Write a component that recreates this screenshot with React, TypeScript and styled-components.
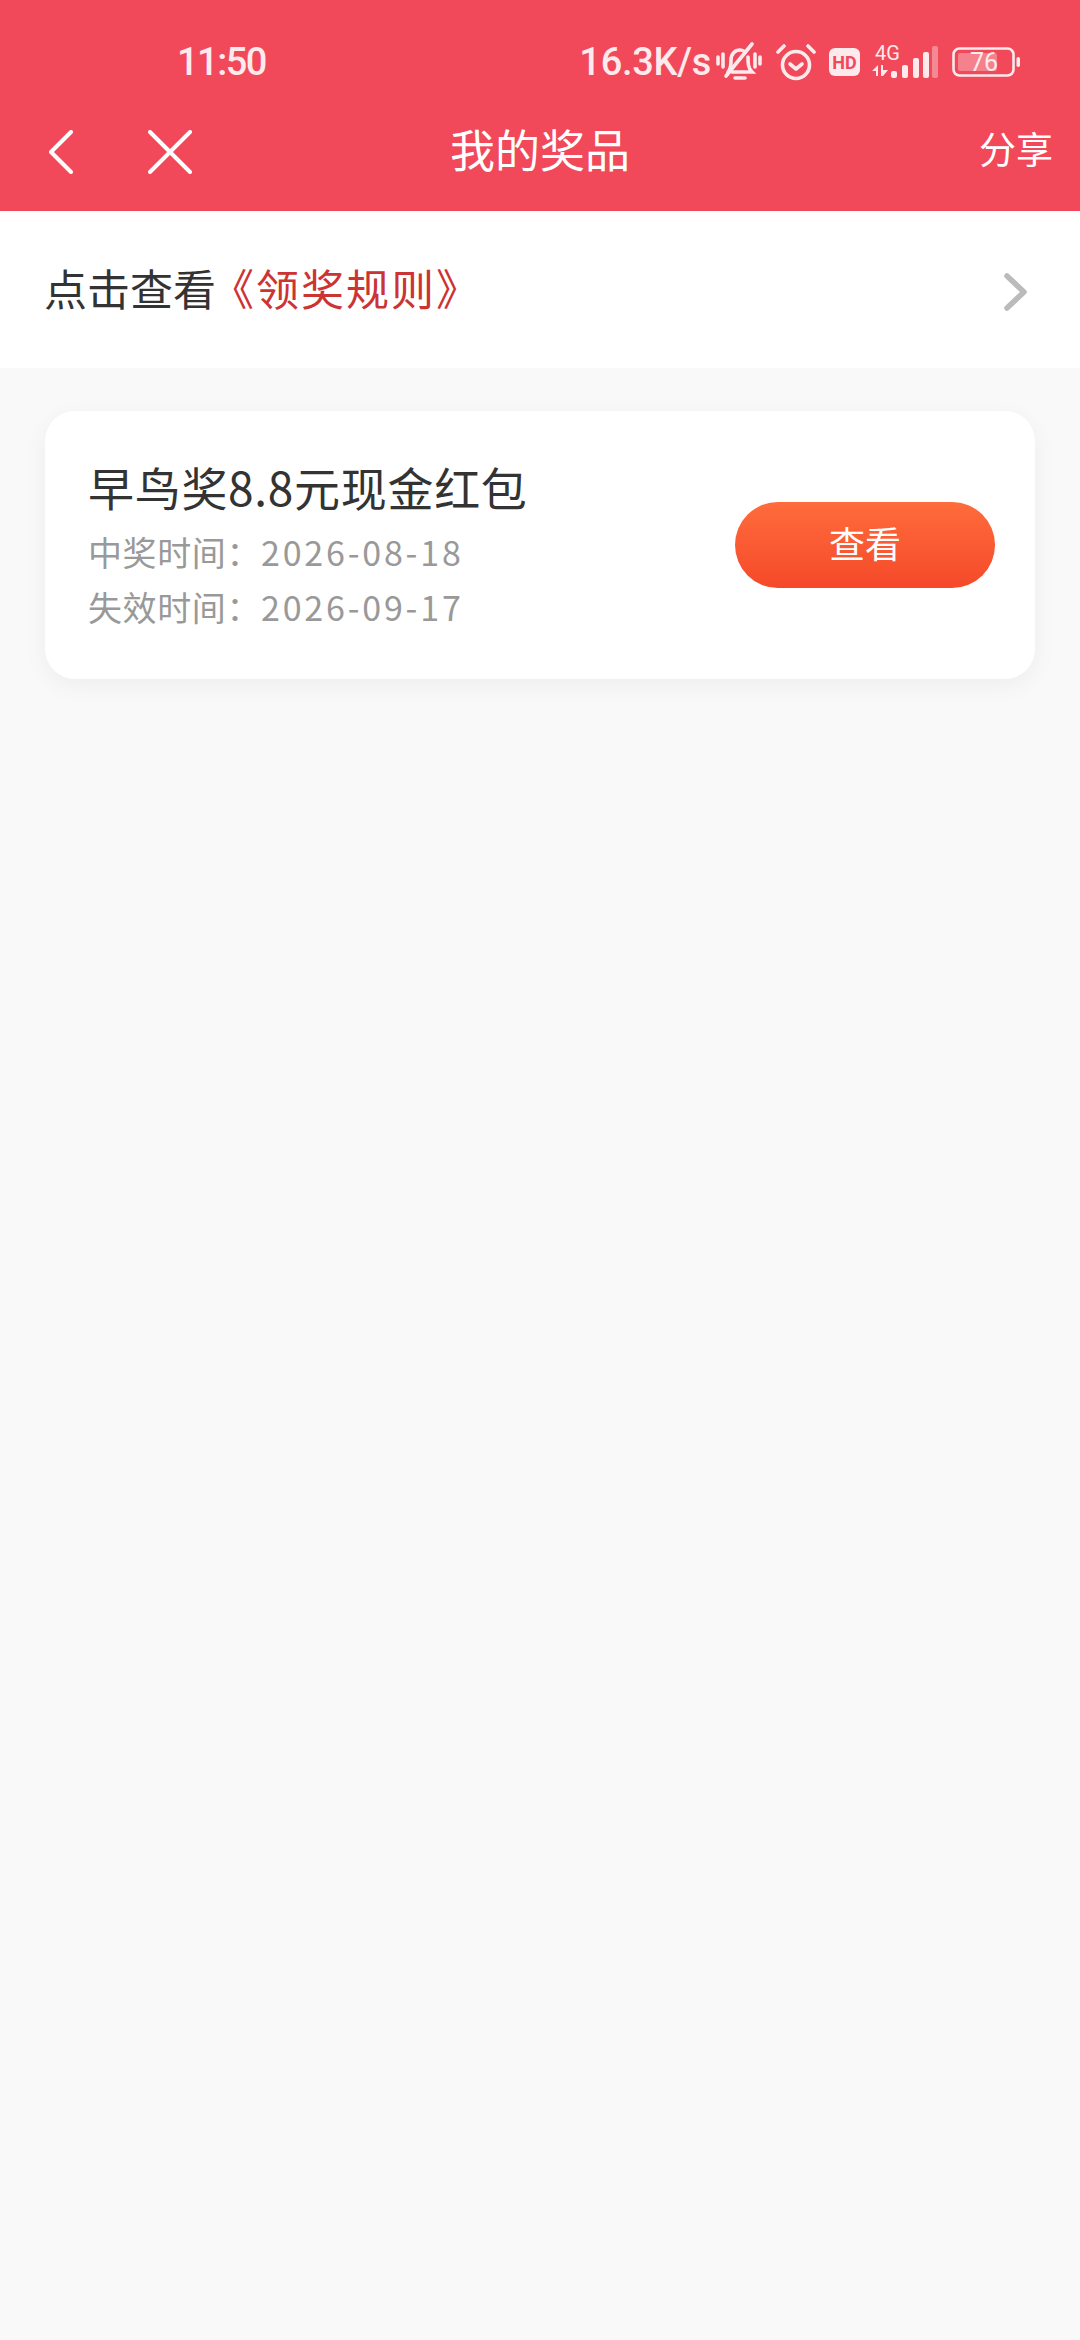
import React from 'react';
import styled, { createGlobalStyle } from 'styled-components';

const GlobalStyle = createGlobalStyle`
  html, body {
    margin: 0;
    padding: 0;
    background: #f9f9f9;
    font-family: "Noto Sans CJK SC", "Noto Sans", sans-serif;
  }
  * { box-sizing: border-box; }
`;

const Page = styled.div`
  width: 1080px;
  height: 2340px;
  background: #f9f9f9;
  display: flex;
  flex-direction: column;
  overflow: hidden;
`;
const Header = styled.header`
  background: #f14959;
  color: #fff;
`;
const StatusBar = styled.div`
  height: 92px;
  padding: 32px 60px 0 177px;
  display: flex;
  align-items: center;
  justify-content: space-between;
`;
const StatusText = styled.span`
  font-family: Roboto, sans-serif;
  font-size: 38px;
  font-weight: 500;
  line-height: 60px;
  color: #fdeaec;
  letter-spacing: -1.5px;
`;
const StatusIcons = styled.div`
  display: flex;
  align-items: center;
`;
const Speed = styled(StatusText)`
  margin-right: 5px;
  letter-spacing: -0.3px;
`;
const Icon = styled.svg<{ $gap?: number }>`
  display: block;
  flex: none;
  margin-left: ${(p) => p.$gap ?? 0}px;
`;
const IconLabel = styled.text<{ $size: number; $bold?: boolean }>`
  font-family: Roboto, sans-serif;
  font-size: ${(p) => p.$size}px;
  font-weight: ${(p) => (p.$bold ? 700 : 400)};
`;
const NavBar = styled.nav`
  height: 119px;
  padding: 0 27px;
  display: grid;
  grid-template-columns: 1fr auto 1fr;
  align-items: center;
`;
const NavLeft = styled.div`
  display: flex;
  align-items: center;
  gap: 75px;
  padding-left: 22px;
`;
const NavTitle = styled.h1`
  margin: 0 0 6px;
  font-size: 45px;
  line-height: 60px;
  font-weight: 400;
`;
const Share = styled.span`
  justify-self: end;
  margin-bottom: 8px;
  font-size: 37px;
  line-height: 50px;
`;
const RuleRow = styled.div`
  height: 157px;
  padding: 0 53px 0 44px;
  background: #fff;
  display: flex;
  align-items: center;
  justify-content: space-between;
`;
const RuleText = styled.div`
  margin-bottom: 6px;
  font-size: 43px;
  line-height: 56px;
  color: #333;
`;
const RuleLink = styled.span`
  margin-left: -5px;
  color: #cc3333;
  letter-spacing: 2px;
`;
const RuleArrow = styled(Icon)`
  margin-top: 4px;
`;
const List = styled.main`
  padding: 43px 45px;
`;
const Card = styled.article`
  height: 268px;
  padding: 0 40px 0 43px;
  background: #fff;
  border-radius: 30px;
  box-shadow: 0 6px 24px rgba(0, 0, 0, 0.05);
  display: flex;
  align-items: center;
  justify-content: space-between;
`;
const PrizeInfo = styled.div`
  display: flex;
  flex-direction: column;
  margin-top: -2px;
`;
const PrizeTitle = styled.div`
  font-size: 46px;
  line-height: 64px;
  color: #333;
  margin-bottom: 6px;
  letter-spacing: 0.7px;
`;
const PrizeDate = styled.div`
  font-size: 34px;
  line-height: 55px;
  color: #999;
  letter-spacing: 0.6px;
`;
const DateValue = styled.span`
  letter-spacing: 2.8px;
`;
const ViewButton = styled.button`
  width: 260px;
  height: 86px;
  padding: 0 0 6px;
  border: 0;
  border-radius: 43px;
  background: linear-gradient(180deg, #ff6c3b 0%, #f5492a 100%);
  color: #fff;
  font-family: inherit;
  font-size: 36px;
`;

const BellOff = () => (
  <Icon width="46" height="42" viewBox="0 0 46 42" fill="none" stroke="#fdeaec" strokeWidth="3.6" strokeLinecap="round">
    <path d="M2 16v7M7 13v13M39 13v13M44 16v7" />
    <path d="M12 31c3-3 3-7 3-12 0-6 4-10 9-10 2 0 4 1 5 2M32 16c0 6 0 11 4 15H16" />
    <path d="M19 37h10" />
    <path d="M10 35 36 3" />
  </Icon>
);

const Alarm = () => (
  <Icon $gap={14} width="40" height="38" viewBox="0 0 40 38" fill="none" stroke="#fdeaec" strokeWidth="3.6" strokeLinecap="round" strokeLinejoin="round">
    <circle cx="20" cy="22" r="13.5" />
    <path d="M2 9 8 3M38 9 32 3" />
    <path d="M14 21l6 5 6-5" />
  </Icon>
);

const HdBadge = () => (
  <Icon $gap={13} width="31" height="28" viewBox="0 0 31 28">
    <rect width="31" height="28" rx="6" fill="#fdeaec" />
    <IconLabel $size={18} $bold x="15.5" y="20.5" textAnchor="middle" fill="#f14959">HD</IconLabel>
  </Icon>
);

const Signal = () => (
  <Icon $gap={12} width="66" height="34" viewBox="0 0 66 34" fill="#fdeaec">
    <IconLabel $size={20} x="3" y="15">4G</IconLabel>
    <path d="M6 20v11H4v-5H0zM9 20h2v5h5l-5 6H9z" />
    <rect x="19" y="26" width="6" height="7" rx="2" />
    <rect x="30" y="20" width="6" height="13" rx="2" />
    <rect x="41" y="13" width="6" height="20" rx="2" />
    <rect x="51" y="7" width="6" height="26" rx="2" />
    <rect x="60" y="1" width="6" height="32" rx="2" opacity="0.4" />
  </Icon>
);

const Battery = () => (
  <Icon $gap={14} width="68" height="30" viewBox="0 0 68 30">
    <rect x="1.5" y="1.5" width="60" height="27" rx="6" fill="none" stroke="#fdeaec" strokeWidth="2.6" />
    <rect x="6" y="6" width="39" height="18" rx="2" fill="#fdeaec" opacity="0.35" />
    <IconLabel $size={25} x="32" y="24" textAnchor="middle" fill="#fdeaec">76</IconLabel>
    <rect x="64.5" y="10" width="3.5" height="10" rx="1.7" fill="#fdeaec" />
  </Icon>
);

const App = () => {
  return (
    <Page>
      <GlobalStyle />
      <Header>
        <StatusBar>
          <StatusText>11:50</StatusText>
          <StatusIcons>
            <Speed>16.3K/s</Speed>
            <BellOff />
            <Alarm />
            <HdBadge />
            <Signal />
            <Battery />
          </StatusIcons>
        </StatusBar>
        <NavBar>
          <NavLeft>
            <Icon width="24" height="44" viewBox="0 0 24 44" fill="none" stroke="#fff" strokeWidth="4" strokeLinecap="round" strokeLinejoin="round">
              <path d="M22 2 2 22l20 20" />
            </Icon>
            <Icon width="44" height="44" viewBox="0 0 44 44" fill="none" stroke="#fff" strokeWidth="4" strokeLinecap="round">
              <path d="M2 2l40 40M42 2 2 42" />
            </Icon>
          </NavLeft>
          <NavTitle>我的奖品</NavTitle>
          <Share>分享</Share>
        </NavBar>
      </Header>
      <RuleRow>
        <RuleText>
          点击查看<RuleLink>《领奖规则》</RuleLink>
        </RuleText>
        <RuleArrow width="23" height="38" viewBox="0 0 23 38" fill="none" stroke="#bbbbbb" strokeWidth="5.5" strokeLinecap="round" strokeLinejoin="round">
          <path d="M3 3l17 16L3 35" />
        </RuleArrow>
      </RuleRow>
      <List>
        <Card>
          <PrizeInfo>
            <PrizeTitle>早鸟奖8.8元现金红包</PrizeTitle>
            <PrizeDate>中奖时间：<DateValue>2026-08-18</DateValue></PrizeDate>
            <PrizeDate>失效时间：<DateValue>2026-09-17</DateValue></PrizeDate>
          </PrizeInfo>
          <ViewButton>查看</ViewButton>
        </Card>
      </List>
    </Page>
  );
};

export default App;
